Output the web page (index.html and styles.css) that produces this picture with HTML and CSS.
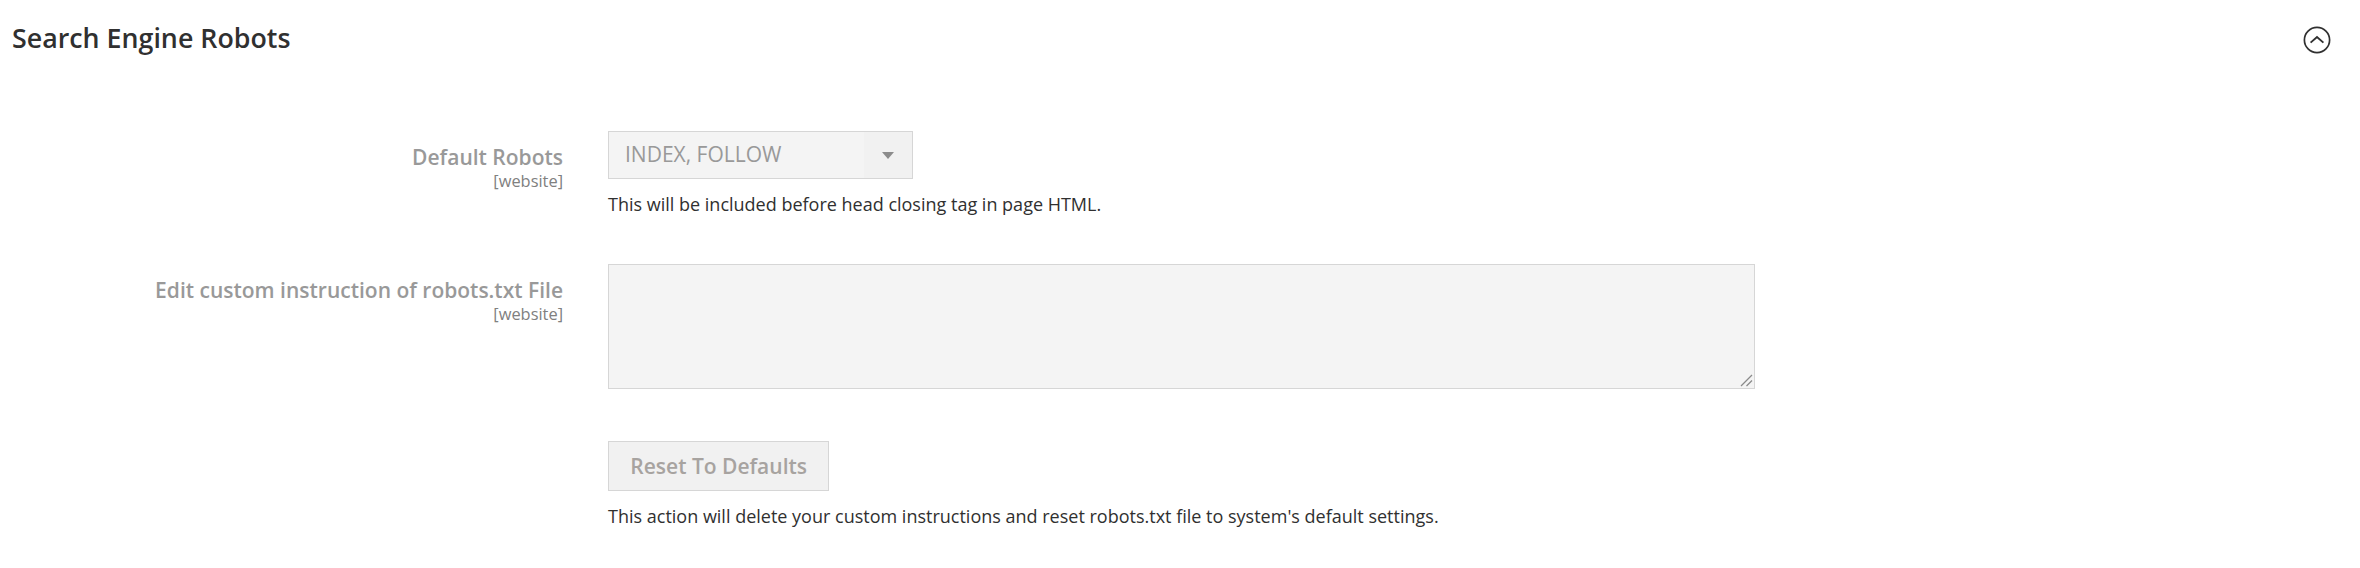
FILE: index.html
```html
<!DOCTYPE html>
<html lang="en">
<head>
<meta charset="utf-8">
<title>Search Engine Robots</title>
<link rel="stylesheet" href="styles.css">
</head>
<body>
<section class="section">
  <header class="section-head">
    <h2 class="section-title">Search Engine Robots</h2>
    <span class="collapse-icon">
      <svg width="28" height="28" viewBox="0 0 28 28" aria-hidden="true">
        <circle cx="14" cy="14" r="12.6" fill="none" stroke="#303030" stroke-width="1.7"/>
        <polyline points="7.6,16.6 14,11 20.4,16.6" fill="none" stroke="#303030" stroke-width="1.9" stroke-linejoin="miter"/>
      </svg>
    </span>
  </header>

  <div class="fields">
    <div class="field field-select">
      <div class="field-label">
        <span class="label-text">Default Robots</span>
        <span class="scope">[website]</span>
      </div>
      <div class="field-control">
        <div class="select">
          <span class="select-value">INDEX, FOLLOW</span>
          <span class="select-arrow"></span>
        </div>
        <p class="note">This will be included before head closing tag in page HTML.</p>
      </div>
    </div>

    <div class="field field-textarea">
      <div class="field-label">
        <span class="label-text">Edit custom instruction of robots.txt File</span>
        <span class="scope">[website]</span>
      </div>
      <div class="field-control">
        <div class="textarea">
          <svg class="resize-grip" width="14" height="14" viewBox="0 0 14 14" aria-hidden="true">
            <line x1="13" y1="2" x2="2" y2="13" stroke="#8a8a8a" stroke-width="1.3"/>
            <line x1="13" y1="7.5" x2="7.5" y2="13" stroke="#8a8a8a" stroke-width="1.3"/>
          </svg>
        </div>
      </div>
    </div>

    <div class="field field-button">
      <div class="field-label"></div>
      <div class="field-control">
        <span class="btn">Reset To Defaults</span>
        <p class="note note-action">This action will delete your custom instructions and reset robots.txt file to system's default settings.</p>
      </div>
    </div>
  </div>
</section>
</body>
</html>
```

FILE: styles.css
```css
html, body {
  margin: 0;
  padding: 0;
  background: #ffffff;
}

body {
  font-family: "Open Sans", "Liberation Sans", sans-serif;
  color: #303030;
}

.section {
  padding: 20px 29px 0 12px;
}

.section-head {
  display: flex;
  align-items: center;
  justify-content: space-between;
  height: 36px;
}

.section-title {
  margin: 0;
  font-size: 26.8px;
  font-weight: 600;
  line-height: 36px;
  color: #303030;
}

.collapse-icon {
  display: block;
  width: 28px;
  height: 28px;
  margin-top: 4px;
  margin-right: 0.5px;
}

.collapse-icon svg {
  display: block;
}

.fields {
  margin-top: 75px;
  display: flex;
  flex-direction: column;
}

.field {
  display: grid;
  grid-template-columns: 551px 1fr;
  column-gap: 45px;
}

.field-select {
  margin-bottom: 46.5px;
}

.field-textarea {
  margin-bottom: 52px;
}

.field-label {
  display: flex;
  flex-direction: column;
  align-items: flex-end;
  text-align: right;
  padding-top: 11.5px;
}

.label-text {
  font-size: 21px;
  font-weight: 600;
  line-height: 28.6px;
  color: #999999;
}

.scope {
  margin-top: 0;
  font-size: 16.4px;
  line-height: 20px;
  color: #808080;
}

.field-control {
  display: flex;
  flex-direction: column;
  align-items: flex-start;
}

.select {
  box-sizing: border-box;
  width: 305px;
  height: 48px;
  border: 1px solid #d6d6d6;
  background: #f4f4f4 linear-gradient(#f1f1f1, #f1f1f1) right / 48px 100% no-repeat;
  display: flex;
  align-items: center;
  justify-content: space-between;
  padding: 0 18px 0 16px;
}

.select-value {
  font-size: 21px;
  line-height: 28.6px;
  padding-bottom: 1px;
  color: #999999;
}

.select-arrow {
  width: 0;
  height: 0;
  border-left: 6px solid transparent;
  border-right: 6px solid transparent;
  border-top: 7px solid #8c8c8c;
}

.note {
  margin: 11.5px 0 0;
  font-size: 18px;
  line-height: 27px;
  color: #303030;
}

.note-action {
  margin-top: 12.5px;
}

.textarea {
  position: relative;
  box-sizing: border-box;
  width: 1147px;
  height: 125px;
  border: 1px solid #d6d6d6;
  background: #f4f4f4;
}

.resize-grip {
  position: absolute;
  right: 1px;
  bottom: 1px;
}

.btn {
  display: inline-block;
  font-size: 21px;
  font-weight: 600;
  line-height: 28.6px;
  color: #a7a3a0;
  background: #f1f1f1;
  border: 1px solid #d6d6d6;
  padding: 9.7px 21.3px;
}
```
